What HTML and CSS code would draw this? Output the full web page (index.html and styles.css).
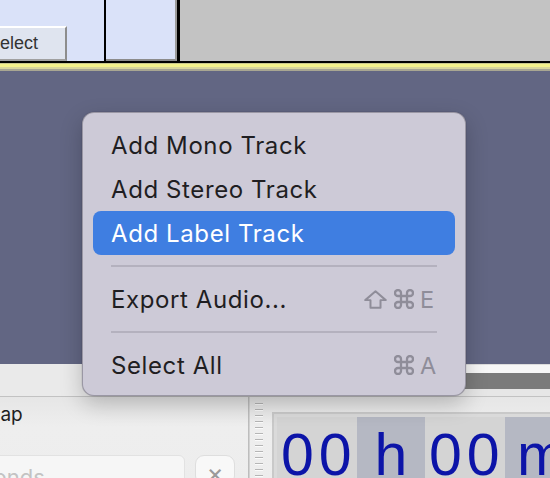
FILE: index.html
```html
<!DOCTYPE html>
<html>
<head>
<meta charset="utf-8">
<link rel="stylesheet" href="styles.css">
</head>
<body>
<div class="app">
  <div class="top">
    <div class="cell cell1"><button class="btn">Select</button></div>
    <div class="vline thin"></div>
    <div class="cell cell2"></div>
    <div class="vline thick"></div>
    <div class="cell cell3"></div>
  </div>
  <div class="yellow"></div>
  <div class="tracks"></div>
  <div class="scrollrow">
    <div class="scroll-left"></div>
    <div class="scroll-right"><div class="hbar"></div></div>
  </div>
  <div class="bottom">
    <div class="tools">
      <div class="snap-label">Snap</div>
      <div class="snap-controls">
        <div class="select-box">Seconds</div>
        <div class="clear-btn">×</div>
      </div>
    </div>
    <div class="divider"></div>
    <div class="timebar">
      <div class="grip"></div>
      <div class="timer">
        <div class="tbox num">00</div>
        <div class="tbox unit">h</div>
        <div class="tbox num">00</div>
        <div class="tbox unit">m</div>
      </div>
    </div>
  </div>

  <div class="menu">
    <div class="item">Add Mono Track</div>
    <div class="item">Add Stereo Track</div>
    <div class="item active">Add Label Track</div>
    <div class="sep"></div>
    <div class="item"><span>Export Audio...</span><span class="sc"><svg class="ico shift" viewBox="0 0 22 18" aria-label="Shift"><path d="M11 1.2 L20.8 9.6 H15.8 V16.8 H6.2 V9.6 H1.2 Z"/></svg><svg class="ico cmd" viewBox="2 2 20 20" aria-label="Command"><path d="M15 6v12a3 3 0 1 0 3-3H6a3 3 0 1 0 3 3V6a3 3 0 1 0-3 3h12a3 3 0 1 0-3-3"/></svg><span class="key">E</span></span></div>
    <div class="sep"></div>
    <div class="item"><span>Select All</span><span class="sc"><svg class="ico cmd" viewBox="2 2 20 20" aria-label="Command"><path d="M15 6v12a3 3 0 1 0 3-3H6a3 3 0 1 0 3 3V6a3 3 0 1 0-3 3h12a3 3 0 1 0-3-3"/></svg><span class="key">A</span></span></div>
  </div>
</div>
</body>
</html>
```
FILE: styles.css
```css
html, body {
  margin: 0;
  padding: 0;
}
body {
  width: 550px;
  height: 478px;
  overflow: hidden;
  font-family: Inter, "Noto Sans", "DejaVu Sans", sans-serif;
}
.app {
  position: relative;
  width: 550px;
  height: 478px;
  display: flex;
  flex-direction: column;
  overflow: hidden;
  background: #ececec;
}

/* top track-control strip */
.top {
  display: flex;
  height: 61px;
  border-bottom: 2px solid #000;
  flex: none;
}
.cell {
  height: 61px;
  box-sizing: border-box;
}
.cell1 {
  width: 104px;
  flex: none;
  background: #dae2f9;
  overflow: hidden;
  display: flex;
  align-items: flex-start;
}
.btn {
  margin: 26px 0 0 -30px;
  width: 97px;
  height: 35px;
  flex: none;
  box-sizing: border-box;
  border: 0;
  border-top: 2px solid #ffffff;
  border-right: 2px solid #8d8d8d;
  border-bottom: 2px solid #a0a0a0;
  background: #dfe4ef;
  padding: 0 0 0 18px;
  text-align: left;
  font-family: "Liberation Sans", Arial, sans-serif;
  font-size: 18px;
  color: #333;
}
.vline {
  background: #000;
  height: 61px;
  flex: none;
}
.vline.thin { width: 2px; }
.vline.thick { width: 3px; }
.cell2 {
  width: 71px;
  flex: none;
  background: #dae2f9;
  border-right: 2px solid #9a9a9a;
  border-bottom: 2px solid #8c8c8c;
}
.cell3 {
  flex: 1;
  background: #c3c3c3;
}

.yellow {
  height: 8px;
  flex: none;
  background: linear-gradient(to bottom,
    #c9c78f 0, #c9c78f 1px,
    #f3f18b 1px, #f3f18b 4px,
    #d8d69c 4px, #d8d69c 6px,
    #a8a692 6px, #a8a692 8px);
}
.tracks {
  height: 293px;
  flex: none;
  background: #626683;
}

.scrollrow {
  height: 33px;
  flex: none;
  display: flex;
  border-bottom: 1px solid #c2c2c2;
  box-sizing: border-box;
}
.scroll-left {
  width: 250px;
  flex: none;
  background: #eaeaea;
}
.scroll-right {
  flex: 1;
  background: #e6e6e6;
  border-top: 1px solid #dcdcdc;
}
.hbar {
  height: 16px;
  border-top: 8px solid #f7f7f7;
  background: #7b7b7b;
}

.bottom {
  flex: 1;
  display: flex;
  min-width: 0;
  background: linear-gradient(to bottom, #e6e6e6, #eeeeee 30px, #ededed);
}
.tools {
  width: 248px;
  flex: none;
  display: flex;
  flex-direction: column;
}
.snap-label {
  margin: 6px 0 0 -23px;
  font-size: 19px;
  line-height: 24px;
  color: #1e1e1e;
}
.snap-controls {
  margin-top: 28px;
  display: flex;
  gap: 10px;
}
.select-box {
  width: 240px;
  flex: none;
  margin-left: -55px;
  height: 30px;
  box-sizing: border-box;
  background: #f6f6f6;
  border: 1px solid #e2e2e2;
  border-radius: 6px;
  padding: 8px 0 0 8px;
  font-size: 22px;
  color: #c3c3c3;
}
.clear-btn {
  width: 40px;
  flex: none;
  height: 30px;
  box-sizing: border-box;
  background: #f8f8f8;
  border: 1px solid #dedede;
  border-radius: 9px;
  text-align: center;
  font-size: 26px;
  line-height: 34px;
  color: #9a9a9a;
}
.divider {
  width: 2px;
  flex: none;
  background: #d2d2d2;
  border-left: 1px solid #bdbdbd;
  box-sizing: border-box;
}
.timebar {
  flex: 1;
  min-width: 0;
  display: flex;
}
.grip {
  width: 8px;
  flex: none;
  margin: 6px 0 0 5px;
  background: repeating-linear-gradient(to bottom,
    #b5b5b5 0, #b5b5b5 1px,
    #fbfbfb 1px, #fbfbfb 2px,
    transparent 2px, transparent 6px);
}
.timer {
  margin: 15px 0 0 9px;
  flex: 1;
  min-width: 0;
  display: flex;
  border-left: 2px solid #c9c9c9;
  border-top: 2px solid #c9c9c9;
  background: #dadada;
  padding: 3px 0 0 3px;
}
.tbox {
  flex: none;
  font-family: "Liberation Sans", Arial, sans-serif;
  font-size: 59px;
  line-height: 59px;
  color: #0c14a8;
  padding-top: 9px;
  box-sizing: border-box;
}
.tbox.num {
  width: 80px;
  background: #d4d4d4;
  padding-left: 4px;
  letter-spacing: 5px;
}
.tbox.unit {
  width: 68px;
  background: #b5b8c3;
  text-align: center;
}
.tbox.unit:last-child {
  flex: 1;
  text-align: left;
  padding-left: 12px;
}

/* popup menu */
.menu {
  position: absolute;
  left: 82px;
  top: 112px;
  width: 384px;
  height: 284px;
  box-sizing: border-box;
  padding: 10px 10px;
  background: #cdcad7;
  border: 1px solid rgba(60, 58, 70, 0.35);
  border-radius: 12px;
  box-shadow: 0 8px 22px rgba(0, 0, 0, 0.22), 0 0 0 0.5px rgba(0,0,0,0.1);
  display: flex;
  flex-direction: column;
}
.item {
  height: 44px;
  flex: none;
  display: flex;
  align-items: center;
  justify-content: space-between;
  padding: 0 18px 0 18px;
  border-radius: 8px;
  font-size: 24px;
  color: #1f1e22;
  letter-spacing: 0.6px;
}
.item.active {
  background: #3f7ee1;
  color: #ffffff;
}
.sep {
  height: 22px;
  flex: none;
  margin: 0 18px;
  background: linear-gradient(#b4b1be, #b4b1be) center / 100% 2px no-repeat;
}
.sc {
  display: flex;
  align-items: center;
  color: #8f8d99;
}
.ico {
  fill: none;
  stroke: #8f8d99;
  stroke-linejoin: round;
  stroke-linecap: round;
  flex: none;
}
.ico.shift {
  width: 23px;
  height: 19px;
  stroke-width: 1.9;
  margin-right: 7px;
}
.ico.cmd {
  width: 20px;
  height: 20px;
  stroke-width: 2.3;
}
.key {
  width: 17px;
  margin-left: 6px;
  text-align: left;
  letter-spacing: 0;
  font-size: 23.5px;
}
```
